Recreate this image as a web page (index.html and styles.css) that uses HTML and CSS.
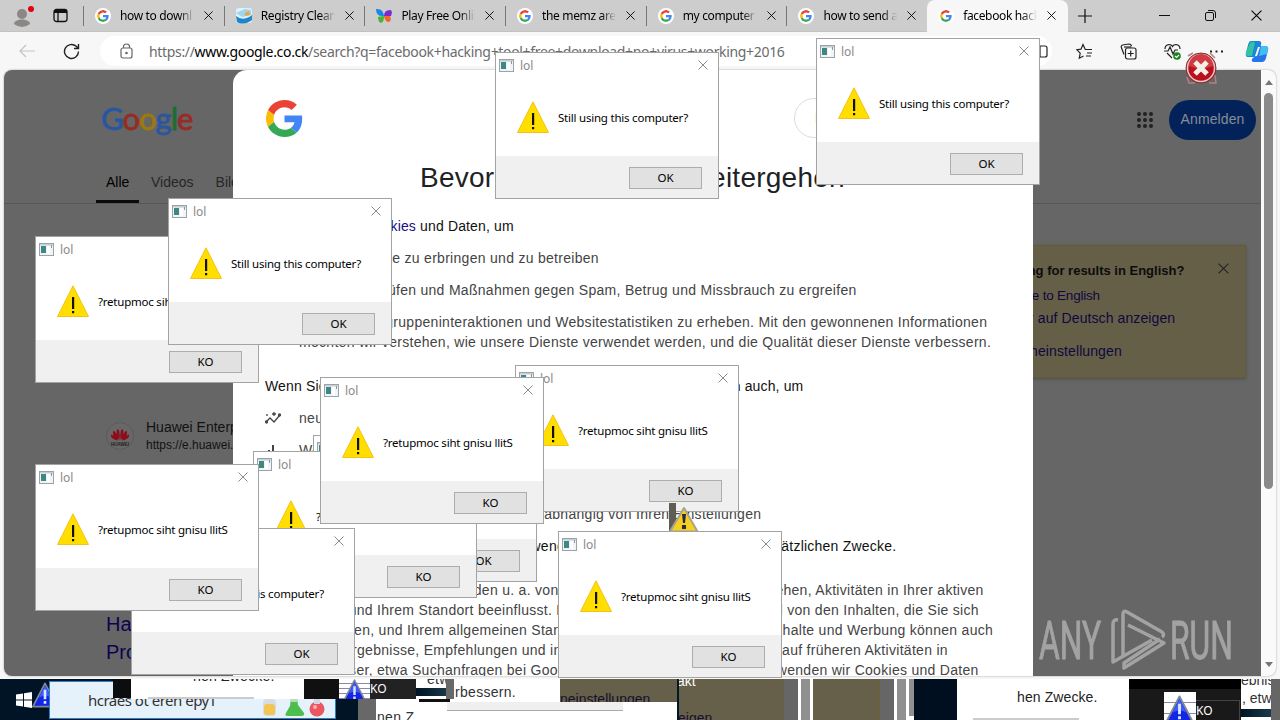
FILE: index.html
```
<!DOCTYPE html>
<html lang="de">
<head>
    <meta charset="UTF-8">
    <meta name="viewport" content="width=device-width, initial-scale=1.0">
    <title>facebook hacking tool - Google Suche</title>
    <link rel="stylesheet" href="styles.css">
</head>
<body>

<!-- shared icons -->
<svg class="sprites" width="0" height="0">
    <symbol id="google" viewBox="0 0 48 48">
        <path fill="#ea4335" d="M24 9.5c3.54 0 6.71 1.22 9.21 3.6l6.85-6.85C35.9 2.38 30.47 0 24 0 14.62 0 6.51 5.38 2.56 13.22l7.98 6.19C12.43 13.72 17.74 9.5 24 9.5z"/>
        <path fill="#4285f4" d="M46.98 24.55c0-1.57-.15-3.09-.38-4.55H24v9.02h12.94c-.58 2.96-2.26 5.48-4.78 7.18l7.73 6c4.51-4.18 7.09-10.36 7.09-17.65z"/>
        <path fill="#fbbc05" d="M10.53 28.59c-.48-1.45-.76-2.99-.76-4.59s.27-3.14.76-4.59l-7.98-6.19C.92 16.46 0 20.12 0 24c0 3.88.92 7.54 2.56 10.78l7.97-6.19z"/>
        <path fill="#34a853" d="M24 48c6.48 0 11.93-2.13 15.89-5.81l-7.73-6c-2.15 1.45-4.92 2.3-8.16 2.3-6.26 0-11.57-4.22-13.47-9.91l-7.98 6.19C6.51 42.62 14.62 48 24 48z"/>
    </symbol>
    <symbol id="x" viewBox="0 0 10 10"><path d="M.5.5l9 9M9.5.5l-9 9" fill="none" stroke="currentColor"/></symbol>
    <symbol id="app" viewBox="0 0 15 13">
        <rect x=".5" y=".5" width="14" height="12" fill="#f1f4f6" stroke="#9aa3a8"/>
        <rect x="1" y="1" width="13" height="1.5" fill="#c6cfd4"/>
        <rect x="2" y="3" width="5" height="7" fill="#3f8783"/>
        <rect x="8" y="3" width="3" height="8" fill="#fff"/>
        <path d="M12.500 2v3" stroke="#8d979c"/>
    </symbol>
    <symbol id="warn" viewBox="0 0 32 32">
        <path d="M16 .8L31.500 31.500H.5z" fill="#ffde00" stroke="#f5c21b"/>
        <path d="M15 12h2.200v12H15zM15 26h2.200v2.200H15z" fill="#111"/>
    </symbol>
    <symbol id="blue" viewBox="0 0 32 30">
        <path d="M16 1.500L30 28.500H2z" fill="#1226e8" stroke="#7f8794" stroke-width="2" stroke-linejoin="round"/>
        <path d="M16 4L9 18q7-4 14 0z" fill="#3b5cff"/>
        <path d="M14.500 9h3v11h-3zM14.500 22h3v3h-3z" fill="#dfe6ff"/>
    </symbol>
</svg>

<div class="desktop">

    <div class="browser">
        <div class="tabs">
            <div class="tabTools">
                <svg width="20" height="24" viewBox="0 0 20 24"><circle cx="8" cy="10" r="5" fill="#8b8784"/><path d="M0 20c0-6 16-6 16 0q-8 6-16 0z" fill="#8b8784"/><circle cx="17" cy="5" r="3" fill="#e3000f"/></svg>
                <svg width="15" height="15" viewBox="0 0 15 15" fill="none" stroke="#111" stroke-width="1.300"><rect x="1" y="1.500" width="13" height="12" rx="2.500"/><path d="M1 3.500h13" stroke-width="3"/><path d="M5 4v9"/></svg>
            </div>
            <div class="tab"><svg class="fav"><use href="#google"/></svg><span>how to downl</span><svg class="tabX"><use href="#x"/></svg></div>
            <div class="tab"><svg class="favPlain" viewBox="0 0 16 16"><rect width="16" height="15" rx="3" fill="#dff2fb"/><path d="M0 5L9 1l6 1v5L6 9z" fill="#9ed6f0"/><path d="M0 8q7 6 16-1v5q-8 6-15 2z" fill="#1f86c9"/><path d="M9 5l4-2 1 4-5 1z" fill="#f0a43a"/></svg><span>Registry Clean</span><svg class="tabX"><use href="#x"/></svg></div>
            <div class="tab"><svg class="favPlain" viewBox="0 0 16 16"><path d="M0 1q7-1 8 7-8 1-8-7z" fill="#1686e8"/><path d="M2 9q4-1 6-1 0 6-3 7-3-1-3-6z" fill="#46b536"/><path d="M8 8q0-6 6-6 3 0 1 6z" fill="#7a2bd0"/><path d="M8 8h6q2 4-1 6-4 0-5-6z" fill="#f0662b"/></svg><span>Play Free Onlin</span><svg class="tabX"><use href="#x"/></svg></div>
            <div class="tab"><svg class="fav"><use href="#google"/></svg><span>the memz are</span><svg class="tabX"><use href="#x"/></svg></div>
            <div class="tab"><svg class="fav"><use href="#google"/></svg><span>my computer</span><svg class="tabX"><use href="#x"/></svg></div>
            <div class="tab"><svg class="fav"><use href="#google"/></svg><span>how to send a</span><svg class="tabX"><use href="#x"/></svg></div>
            <div class="tab active"><svg class="fav"><use href="#google"/></svg><span>facebook hack</span><svg class="tabX"><use href="#x"/></svg></div>
            <svg class="newTab" width="14" height="14" viewBox="0 0 14 14" stroke="#111" stroke-width="1.200"><path d="M7 0v14M0 7h14"/></svg>
            <div class="winButtons">
                <svg width="11" height="11" viewBox="0 0 11 11" stroke="#111"><path d="M0 5.500h11"/></svg>
                <svg width="11" height="11" viewBox="0 0 11 11" fill="none" stroke="#111"><rect x=".5" y="2.500" width="8" height="8" rx="1.500"/><path d="M3 .5h5q2.500 0 2.500 2.500v5"/></svg>
                <svg width="11" height="11"><use href="#x"/></svg>
            </div>
        </div>

        <div class="toolbar">
            <svg class="back" width="17" height="14" viewBox="0 0 17 14" fill="none" stroke="#c3c3c3" stroke-width="1.200"><path d="M16 7H1M7 1L1 7l6 6"/></svg>
            <svg class="reload" width="17" height="17" viewBox="0 0 17 17" fill="none" stroke="#222" stroke-width="1.400"><path d="M15.500 8.500a7 7 0 1 1-2.300-5.200L15.500 5.500M15.500 1v4.500H11"/></svg>
            <div class="address">
                <svg width="13" height="16" viewBox="0 0 13 16" fill="none" stroke="#666" stroke-width="1.200"><rect x="1" y="5" width="11" height="10" rx="2"/><path d="M3.500 5V3.500q0-2.500 3-2.500t3 2.500V5"/><circle cx="6.500" cy="10" r=".7" fill="#666"/></svg>
                <span class="url">https://<b>www.google.co.ck</b>/search?q=facebook+hacking+tool+free+download+no+virus+working+2016</span>
            </div>
            <div class="tools">
                <svg width="17" height="17" viewBox="0 0 17 17"><rect x="1" y="3" width="14" height="11" rx="2"/><path d="M8 3v11"/></svg>
                <svg width="17" height="17" viewBox="0 0 17 17"><path d="M11 6.500H9.300L7 1.500 5 6.200.8 6.700l3.400 3.500-.9 5L7.500 13M10 6.500h6M11 10h5M10 13h5"/></svg>
                <svg width="17" height="17" viewBox="0 0 17 17"><path d="M4 11.500L1.200 4Q1 2.500 2.500 2L9 1q2 0 2.500 2"/><path d="M4 4h7.500"/><rect x="5.500" y="5" width="10.500" height="11" rx="2"/><path d="M10.700 7.500v6M7.700 10.500h6"/></svg>
                <svg width="17" height="17" viewBox="0 0 17 17"><path d="M1 6q0-4 4-4.500 2.500 0 3.500 2 1-2 3.500-2 4 .5 4 4.500M0 8h4l2-4 3 7 2-4h3M3 10l5 5"/><circle cx="13" cy="13" r="3.800" fill="#16831c" stroke="none"/><path d="M11 13l1.500 1.500L15 12" stroke="#fff"/></svg>
                <svg width="17" height="17" viewBox="0 0 17 17"><path d="M2 8.500h2M7.500 8.500h2M13 8.500h2" stroke-width="2"/></svg>
            </div>
            <svg class="copilot" width="24" height="23" viewBox="0 0 24 23">
                <path d="M6 1h8q3 0 2 4l-3 9q-1 3-4 3H3q-3 0-2-4l2-8q1-4 3-4z" fill="#1687d9"/>
                <path d="M5 3q3-2 5 0L7 16H3q-3 0-2-4z" fill="#34c2a4"/>
                <path d="M15 6h5q4 0 3 4l-2 8q-1 4-4 4H9q-3 0-2-3l2-2q3 0 4-4z" fill="#2377ea"/>
                <path d="M16 6h4q4 0 3 4l-1 4-8 2z" fill="#43bdf2"/>
                <path d="M13 7h2l-3 9h-2z" fill="#f7f7f7"/>
            </svg>
        </div>

        <div class="viewport">
            <div class="page">
                <div class="masthead">
                    <div class="wordmark"><span class="b">G</span><span class="r">o</span><span class="y">o</span><span class="b">g</span><span class="g">l</span><span class="r">e</span></div>
                    <div class="account">
                        <svg width="18" height="18" viewBox="0 0 18 18" fill="#222"><circle cx="3" cy="3" r="2"/><circle cx="9" cy="3" r="2"/><circle cx="15" cy="3" r="2"/><circle cx="3" cy="9" r="2"/><circle cx="9" cy="9" r="2"/><circle cx="15" cy="9" r="2"/><circle cx="3" cy="15" r="2"/><circle cx="9" cy="15" r="2"/><circle cx="15" cy="15" r="2"/></svg>
                        <span class="login">Anmelden</span>
                    </div>
                </div>
                <div class="nav"><span class="current">Alle</span><span>Videos</span><span>Bilder</span></div>
                <div class="columns">
                    <div class="results">
                        <div class="site">
                            <svg width="28" height="28" viewBox="0 0 28 28"><circle cx="14" cy="14" r="13.500" fill="#686868" stroke="#5b5b5b"/><g fill="#8e0d1a"><path d="M13.500 18q-5-7-2-11 3 1 2 11zM14.500 18q5-7 2-11-3 1-2 11zM12.500 18Q5 14 7.500 8.500 11 11 12.500 18zM15.500 18q7.500-4 5-9.500-3.500 2.500-5 9.500zM12 18.500q-7-1-7.500-6 5 1 7.500 6zM16 18.500q7-1 7.500-6-5 1-7.500 6z"/></g><text x="14" y="24" text-anchor="middle" class="tiny">HUAWEI</text></svg>
                            <div><p>Huawei Enterprise</p><p class="small">https://e.huawei.com</p></div>
                        </div>
                        <h3>Ha<br>Pro</h3>
                    </div>
                    <div class="langCard">
                        <p class="question">Looking for results in English?</p>
                        <svg width="11" height="11"><use href="#x"/></svg>
                        <p class="first">Change to English</p>
                        <p class="second">Weiter auf Deutsch anzeigen</p>
                        <p class="third">Spracheinstellungen</p>
                    </div>
                </div>
                <div class="anyrun">
                    <span>ANY</span>
                    <svg width="58" height="64" viewBox="0 0 58 64" fill="none" stroke="#a3a3a3" stroke-width="3.500" stroke-linejoin="round"><path d="M9 11q-5-1-5 4v38l7-4 32-18"/><path d="M14 47V5q0-4 4-2l35 20q3 3 0 5"/><path d="M19 16l36 18-40 25v-5l36-24"/></svg>
                    <span>RUN</span>
                </div>
            </div>
            <div class="scrollbar">
                <svg width="8" height="5" viewBox="0 0 8 5"><path d="M0 5l4-5 4 5z" fill="#777"/></svg>
                <div class="thumb"></div>
                <svg width="8" height="5" viewBox="0 0 8 5"><path d="M0 0l4 5 4-5z" fill="#777"/></svg>
            </div>

            <div class="consent">
                <div class="consentTop"><svg width="37" height="37"><use href="#google"/></svg><span class="langPick">DE</span></div>
                <h1>Bevor Sie zu Google weitergehen</h1>
                <p class="lead">Wir verwenden <a>Cookies</a> und Daten, um</p>
                <p class="item">Google-Dienste zu erbringen und zu betreiben</p>
                <p class="item">Ausfälle zu prüfen und Maßnahmen gegen Spam, Betrug und Missbrauch zu ergreifen</p>
                <p class="item">Daten zu Zielgruppeninteraktionen und Websitestatistiken zu erheben. Mit den gewonnenen Informationen</p>
                <p class="item more">möchten wir verstehen, wie unsere Dienste verwendet werden, und die Qualität dieser Dienste verbessern.</p>
                <p class="lead l2">Wenn Sie „Alle akzeptieren“ auswählen, verwenden wir Cookies und Daten auch, um</p>
                <p class="item"><svg width="16" height="12" viewBox="0 0 16 12" fill="none" stroke="#444" stroke-width="1.300"><path d="M1 10l4-4 4 4 6-7"/><circle cx="1.500" cy="10" r="1"/><circle cx="14.500" cy="3" r="1"/><path d="M9 0v4M7 2h4M2 2v2"/></svg>neue Dienste zu entwickeln und zu verbessern</p>
                <p class="item"><svg width="16" height="12" viewBox="0 0 16 12" fill="#444"><path d="M3 6h2v6H3zM7 1h2v11H7zM11 8h2v4h-2z"/></svg>Werbung auszuliefern und ihre Wirkung zu messen</p>
                <p class="item tight">personalisierte Inhalte anzuzeigen, abhängig von Ihren Einstellungen</p>
                <p class="item">personalisierte Werbung anzuzeigen, abhängig von Ihren Einstellungen</p>
                <p class="lead l3">Wenn Sie „Alle ablehnen“ auswählen, verwenden wir Cookies nicht für diese zusätzlichen Zwecke.</p>
                <div class="fine">
                    <p>Nicht personalisierte Inhalte werden u. a. von Inhalten, die Sie sich gerade ansehen, Aktivitäten in Ihrer aktiven</p>
                    <p>Suchsitzung und Ihrem Standort beeinflusst. Nicht personalisierte Werbung wird von den Inhalten, die Sie sich</p>
                    <p>gerade ansehen, und Ihrem allgemeinen Standort beeinflusst. Personalisierte Inhalte und Werbung können auch</p>
                    <p>relevantere Ergebnisse, Empfehlungen und individuelle Werbung enthalten, die auf früheren Aktivitäten in</p>
                    <p>diesem Browser, etwa Suchanfragen bei Google, basieren. Gegebenenfalls verwenden wir Cookies und Daten</p>
                </div>
            </div>
        </div>
    </div>

    <!-- torn taskbar: every shard is a loose piece of the screen -->
    <div class="taskbar">
        <svg class="start" width="16" height="16" viewBox="0 0 16 16" fill="#fff"><path d="M0 2.500L7 1.500V7.500H0zM8 1.300L16 0v7.500H8zM0 8.500h7v6l-7-1zM8 8.500h8V16l-8-1.300z"/></svg>
        <svg class="tri t1"><use href="#blue"/></svg>
        <div class="search"><span>hcraes ot ereh epyT</span>
            <svg width="68" height="20" viewBox="0 0 68 20"><rect x="3" y="2" width="13" height="17" rx="4" fill="#d8dde0"/><rect x="4" y="7" width="11" height="11" rx="3" fill="#f3c552"/><path d="M31 1h6l1 7 6 8q1 3-3 3H28q-4 0-2-3l4-7z" fill="#4cbe4e"/><path d="M31 1h6v4h-6z" fill="#bcd9be"/><circle cx="57" cy="12" r="7.500" fill="#ec5661"/><path d="M54 1h6v6h-6z" fill="#d5d5dd"/><circle cx="55" cy="10" r="2" fill="#f9aeb2"/></svg>
        </div>
        <div class="shard s1"></div>
        <div class="shard s2"><span>hen Zwecke.</span></div>
        <div class="shard s3"></div>
        <div class="shard s4"></div>
        <div class="shard s5"><svg class="tri"><use href="#blue"/></svg></div>
        <div class="shard s6">KO</div>
        <div class="shard s7"></div>
        <div class="shard s8"></div>
        <div class="shard s9"></div>
        <div class="shard word w1">nen Z</div>
        <div class="shard word w2">etw</div>
        <div class="shard s10"></div>
        <div class="shard word w3">rbessern.</div>
        <div class="shard s11"></div>
        <div class="shard olive o1"><span>neinstellungen</span></div>
        <div class="shard s12"></div>
        <div class="shard olive o2"><i>akt</i><span>zeigen</span></div>
        <div class="shard bars"><div></div><div></div><div></div></div>
        <div class="shard olive o3"></div>
        <div class="shard bars late"><div></div><div></div><div></div></div>
        <div class="shard s13"></div>
        <div class="shard s14"><span>hen Zwecke.</span><div></div></div>
        <div class="shard s15"><div class="patch"><svg class="tri"><use href="#blue"/></svg></div><div class="ko">KO</div></div>
        <div class="shard s16"><span>ebnis</span><b>, etwa</b><div></div></div>
        <div class="shard s17"></div>
    </div>

    <!-- message boxes, back to front -->
    <div class="box g"><div class="title"><svg class="app"><use href="#app"/></svg>lol<svg class="close"><use href="#x"/></svg></div><div class="msg"><svg><use href="#warn"/></svg><span>Still using this computer?</span></div><div class="foot"><div class="btn">OK</div></div></div>
    <div class="box h"><div class="title"><svg class="app"><use href="#app"/></svg>lol<svg class="close"><use href="#x"/></svg></div><div class="msg"><svg><use href="#warn"/></svg><span>?retupmoc siht gnisu llitS</span></div><div class="foot"><div class="btn">KO</div></div></div>
    <div class="box e"><div class="title"><svg class="app"><use href="#app"/></svg>lol<svg class="close"><use href="#x"/></svg></div><div class="msg"><svg><use href="#warn"/></svg><span>?retupmoc siht gnisu llitS</span></div><div class="foot"><div class="btn">KO</div></div></div>
    <div class="box f"><div class="title"><svg class="app"><use href="#app"/></svg>lol<svg class="close"><use href="#x"/></svg></div><div class="msg"><svg><use href="#warn"/></svg><span>?retupmoc siht gnisu llitS</span></div><div class="foot"><div class="btn">KO</div></div></div>
    <div class="box j"><div class="title"><svg class="app"><use href="#app"/></svg>lol<svg class="close"><use href="#x"/></svg></div><div class="msg"><svg><use href="#warn"/></svg><span>Still using this computer?</span></div><div class="foot"><div class="btn">OK</div></div></div>
    <div class="box i"><div class="title"><svg class="app"><use href="#app"/></svg>lol<svg class="close"><use href="#x"/></svg></div><div class="msg"><svg><use href="#warn"/></svg><span>?retupmoc siht gnisu llitS</span></div><div class="foot"><div class="btn">KO</div></div></div>
    <div class="box d"><div class="title"><svg class="app"><use href="#app"/></svg>lol<svg class="close"><use href="#x"/></svg></div><div class="msg"><svg><use href="#warn"/></svg><span>?retupmoc siht gnisu llitS</span></div><div class="foot"><div class="btn">KO</div></div></div>
    <div class="box c"><div class="title"><svg class="app"><use href="#app"/></svg>lol<svg class="close"><use href="#x"/></svg></div><div class="msg"><svg><use href="#warn"/></svg><span>Still using this computer?</span></div><div class="foot"><div class="btn">OK</div></div></div>
    <div class="box a"><div class="title"><svg class="app"><use href="#app"/></svg>lol<svg class="close"><use href="#x"/></svg></div><div class="msg"><svg><use href="#warn"/></svg><span>Still using this computer?</span></div><div class="foot"><div class="btn">OK</div></div></div>
    <div class="box b"><div class="title"><svg class="app"><use href="#app"/></svg>lol<svg class="close"><use href="#x"/></svg></div><div class="msg"><svg><use href="#warn"/></svg><span>Still using this computer?</span></div><div class="foot"><div class="btn">OK</div></div></div>

    <div class="smear"></div>
    <svg class="stamp" width="32" height="30" viewBox="0 0 32 30"><path d="M16 3L29.500 26.500H2z" fill="#f5cf22" stroke="#a9a28c" stroke-width="2" stroke-linejoin="round"/><path d="M14 9h4l-1 9h-2zM14 20h4v4h-4z" fill="#2b2a3c"/></svg>
    <div class="box k"><div class="title"><svg class="app"><use href="#app"/></svg>lol<svg class="close"><use href="#x"/></svg></div><div class="msg"><svg><use href="#warn"/></svg><span>?retupmoc siht gnisu llitS</span></div><div class="foot"><div class="btn">KO</div></div></div>

    <svg class="error" width="34" height="34" viewBox="0 0 34 34">
        <path d="M4 5l5-3M26 2l5 5M3 26l2 6h6M25 32h7l-1-8" fill="none" stroke="#b77f7f" stroke-width="1.500"/>
        <circle cx="17" cy="17" r="15" fill="#b9101b" stroke="#7d3434"/><circle cx="17" cy="17" r="13.500" fill="none" stroke="#e9c9c9" stroke-width="1.500"/>
        <path d="M5 15a12 12 0 0 1 24 0q-12 5-24 0z" fill="#d03a43"/>
        <path d="M11 11l12 12M23 11L11 23" stroke="#f2efe8" stroke-width="5"/>
    </svg>
</div>

</body>
</html>
```

FILE: styles.css
```
* {
    box-sizing: border-box;
}
body {
    margin: 0;
    font-family: "Liberation Sans", Arial, sans-serif;
    overflow: hidden;
}
p, h1, h3 {
    margin: 0;
    font-weight: normal;
}
.sprites {
    position: absolute;
}
.desktop {
    position: relative;
    width: 1280px;
    height: 720px;
    overflow: hidden;
    background: #f7f7f7;
}
.browser {
    display: flex;
    flex-direction: column;
    height: 679px;
    background: #f7f7f7;
}

/* tab strip */
.tabs {
    display: flex;
    align-items: center;
    height: 32px;
    background: #cdcdcd;
    border-bottom: 1px solid #c2c2c2;
    font: 12px "Noto Sans", sans-serif;
    flex: none;
}
.tabTools {
    display: flex;
    align-items: center;
    gap: 19px;
    width: 83px;
    padding-left: 14px;
    flex: none;
}
.tab {
    display: flex;
    align-items: center;
    width: 140.7px;
    height: 20px;
    padding-left: 11px;
    border-left: 1px solid #777;
    flex: none;
}
.tab span {
    width: 74px;
    margin-left: 9px;
    white-space: nowrap;
    overflow: hidden;
    letter-spacing: -0.35px;
    -webkit-mask-image: linear-gradient(90deg, #000 80%, transparent);
}
.tab.active {
    height: 32px;
    background: #f7f7f7;
    border-left: 0;
    border-radius: 8px 8px 0 0;
}
.fav {
    width: 16px;
    height: 16px;
    padding: 2px;
    border-radius: 50%;
    background: #fff;
    flex: none;
}
.favPlain {
    width: 16px;
    height: 16px;
    flex: none;
}
.tabX {
    width: 9px;
    height: 9px;
    margin-left: 10px;
    flex: none;
}
.newTab {
    margin-left: 10px;
}
.winButtons {
    display: flex;
    gap: 35px;
    margin-left: auto;
    margin-right: 18px;
}

/* toolbar */
.toolbar {
    display: flex;
    align-items: center;
    height: 38px;
    flex: none;
}
.back {
    margin-left: 19px;
}
.reload {
    margin-left: 27px;
}
.address {
    display: flex;
    align-items: center;
    gap: 16px;
    width: 952px;
    height: 30px;
    margin-left: 20px;
    padding-left: 20px;
    border-radius: 15px;
    background: #fff;
}
.url {
    font: 14px "Noto Sans", sans-serif;
    color: #6b6b6b;
    white-space: nowrap;
    letter-spacing: -0.33px;
}
.url b {
    font-weight: normal;
    color: #000;
}
.tools {
    display: flex;
    gap: 27px;
    margin-left: -20px;
    fill: none;
    stroke: #222;
    stroke-width: 1.2;
}
.copilot {
    margin-left: 20px;
}

/* page behind the consent layer */
.viewport {
    position: relative;
    display: flex;
    width: 1272px;
    height: 606px;
    margin-left: 4px;
    border-radius: 8px;
    background: #fafafa;
    box-shadow: 0 0 2px #999;
    overflow: hidden;
}
.page {
    width: 1257px;
    background: #666;
    flex: none;
}
.masthead {
    display: flex;
    align-items: center;
    justify-content: space-between;
    height: 99px;
    padding: 0 5px 0 97px;
}
.wordmark {
    padding-bottom: 3px;
    font: 31px Lato, sans-serif;
    letter-spacing: -1px;
    -webkit-text-stroke: 0.8px;
}
.wordmark .b { color: #2a56a0; }
.wordmark .r { color: #962c26; }
.wordmark .y { color: #9b7a0c; }
.wordmark .g { color: #1e6d36; }
.account {
    display: flex;
    align-items: center;
    gap: 15px;
}
.login {
    width: 87px;
    height: 40px;
    border-radius: 20px;
    background: #04225a;
    color: #868d99;
    font-size: 14px;
    line-height: 39px;
    text-align: center;
    letter-spacing: 0.1px;
}
.nav {
    display: flex;
    gap: 2px;
    height: 35px;
    padding-left: 92px;
    border-bottom: 1px solid #575757;
    font-size: 14px;
    color: #272727;
    line-height: 27px;
}
.nav span {
    padding: 0 10px;
}
.nav .current {
    width: 43px;
    height: 34px;
    color: #000;
    border-bottom: 3px solid #0b0b0b;
}
.columns {
    display: flex;
    justify-content: space-between;
    padding-right: 15px;
}
.results {
    padding: 214px 0 0 102px;
}
.site {
    display: flex;
    align-items: center;
    gap: 12px;
    font-size: 14px;
    line-height: 18px;
    color: #121212;
}
.site .small {
    font-size: 12px;
}
.tiny {
    font-size: 4.5px;
    font-weight: bold;
    fill: #222;
}
.results h3 {
    margin-top: 156px;
    font-size: 20px;
    line-height: 28px;
    color: #0a0450;
}
.langCard {
    position: relative;
    width: 340px;
    height: 133px;
    margin-top: 41px;
    padding: 16px 0 0 86px;
    background: #665f48;
    border: 1px solid #625c3d;
    box-shadow: 0 1px 3px #4e4e45;
    font-size: 14px;
    line-height: 18px;
    letter-spacing: 0.1px;
    color: #0f0840;
    white-space: nowrap;
}
.langCard .question {
    font-size: 13px;
    font-weight: bold;
    letter-spacing: 0;
    color: #0c0c0c;
    margin-bottom: 7px;
}
.langCard .first {
    font-size: 13.5px;
    letter-spacing: -0.2px;
}
.langCard .second {
    margin-top: 4px;
}
.langCard .third {
    margin-top: 15px;
}
.langCard svg {
    position: absolute;
    top: 17px;
    right: 16px;
    color: #222;
}
.anyrun {
    position: absolute;
    left: 1035px;
    top: 539px;
    display: flex;
    align-items: center;
    color: #a3a3a3;
    font: 53px Roboto, sans-serif;
}
.anyrun span {
    width: 63px;
    transform: scaleX(0.6);
    transform-origin: 0 50%;
    -webkit-text-stroke: 1px;
}
.anyrun svg {
    margin: 0 3px 0 7px;
    flex: none;
}
.scrollbar {
    display: flex;
    flex-direction: column;
    align-items: center;
    justify-content: space-between;
    width: 15px;
    padding: 10px 0 9px;
}
.thumb {
    width: 9px;
    height: 396px;
    margin-bottom: 166px;
    border-radius: 5px;
    background: #8a8a8a;
}

/* consent layer */
.consent {
    position: absolute;
    left: 229px;
    top: 0;
    width: 800px;
    height: 606px;
    padding: 0 32px;
    border-radius: 14px 0 0 0;
    background: #fff;
    color: #444;
    font-size: 14px;
    line-height: 20px;
    letter-spacing: 0.29px;
    white-space: nowrap;
}
.consentTop {
    display: flex;
    align-items: center;
    justify-content: space-between;
    height: 80px;
    padding: 16px 0 0 1px;
}
.langPick {
    width: 207px;
    height: 40px;
    padding: 9px 20px;
    border: 1px solid #dadce0;
    border-radius: 20px;
}
.consent h1 {
    margin: 8px 0 18px 155px;
    font: 28px/40px "Liberation Sans", Arial, sans-serif;
    letter-spacing: 0.25px;
    color: #202124;
}
.lead {
    color: #111;
    letter-spacing: 0.15px;
}
.lead a {
    color: #1a0d80;
}
.item {
    padding-left: 34px;
    margin-top: 12px;
}
.item svg {
    margin: 0 18px 0 -34px;
    vertical-align: -1px;
}
.more {
    margin-top: 0;
}
.tight {
    letter-spacing: 0.1px;
}
.l2 {
    margin-top: 24px;
}
.l3 {
    margin-top: 12px;
    letter-spacing: 0.23px;
}
.fine {
    margin-top: 24px;
}

/* taskbar shards */
.taskbar {
    position: absolute;
    left: 0;
    top: 679px;
    width: 1280px;
    height: 41px;
    background: linear-gradient(90deg, #001426 0 372px, #fff 372px);
    overflow: hidden;
    font-size: 14px;
}
.start {
    position: absolute;
    left: 16px;
    top: 13px;
}
.tri {
    position: absolute;
    left: 0;
    top: 0;
    width: 30px;
    height: 26px;
}
.t1 {
    left: 30px;
    top: 3px;
}
.search {
    position: absolute;
    left: 49px;
    top: 2px;
    width: 287px;
    height: 38px;
    border: 1px solid #2b7fc4;
    background: #e6f2fb;
    color: #333;
    font: 15px "Noto Sans", sans-serif;
}
.search span {
    position: absolute;
    left: 38px;
    top: 8px;
    white-space: nowrap;
    letter-spacing: -0.5px;
}
.search svg {
    position: absolute;
    left: 210px;
    top: 15px;
}
.shard {
    position: absolute;
    overflow: hidden;
    top: 0;
    white-space: nowrap;
}
.s1 { left: 113px; width: 19px; height: 19px; background: #0c0d0f; }
.s2 { left: 131px; width: 173px; height: 20px; background: #fff; }
.s2 span { position: absolute; left: 62px; top: -11px; letter-spacing: 0.2px; color: #222; }
.s3 { left: 148px; top: 18px; width: 106px; height: 2px; background: #ccc; }
.s4 { left: 304px; width: 35px; height: 20px; background: #101010; }
.s5 { left: 339px; width: 32px; height: 20px; background: repeating-linear-gradient(#fff 0 4px, #88a 4px 5px); }
.s5 .tri { width: 31px; height: 24px; }
.s6 { left: 370px; width: 46px; height: 20px; background: #222; color: #fff; font: 12px/20px "Noto Sans", sans-serif; }
.s7 { left: 416px; top: 9px; width: 34px; height: 8px; background: linear-gradient(90deg, #001322, #193b4b); }
.s8 { left: 419px; top: 20px; width: 31px; height: 3px; background: #111; }
.s9 { left: 358px; top: 20px; width: 18px; height: 21px; background: #686868; }
.s10 { left: 446px; width: 8px; height: 20px; background: #686868; }
.s11 { left: 447px; top: 23px; width: 176px; height: 9px; background: #efefef; border-bottom: 1px solid #aaa; }
.s12 { left: 677px; width: 2px; height: 41px; background: #00182a; }
.word { color: #333; letter-spacing: 0.3px; line-height: 20px; }
.w1 { left: 377px; top: 28px; }
.w2 { left: 427px; top: -10px; }
.w3 { left: 455px; top: 3px; }
.olive { background: #665f4a; color: #17102f; height: 41px; }
.olive span { position: absolute; }
.o1 { left: 560px; width: 117px; height: 23px; }
.o1 span { left: 0; top: 12px; }
.o2 { left: 679px; width: 105px; }
.o2 i { position: absolute; left: -2px; top: -6px; font-style: normal; color: #fff; }
.o2 span { left: -8px; top: 31px; }
.o3 { left: 813px; width: 67px; border-right: 1px solid #6d6230; }
.bars { display: flex; gap: 3px; left: 784px; height: 41px; background: #fff; }
.bars div { width: 14px; background: #666; }
.bars div + div { width: 9px; background: #909090; }
.bars div:last-child { width: 0; }
.late { left: 880px; }
.bars.late div:last-child { width: 5px; height: 37px; }
.s13 { left: 914px; width: 43px; height: 41px; background: #000f1f; }
.s14 { left: 957px; width: 172px; height: 41px; background: #fff; color: #222; letter-spacing: 0.1px; }
.s14 span { position: absolute; left: 60px; top: 10px; }
.s14 div { position: absolute; left: 16px; top: 39px; width: 106px; height: 2px; background: #ccc; }
.s15 { left: 1129px; width: 112px; height: 41px; background: #191919; border-top: 10px solid #000; }
.patch { position: absolute; left: 35px; top: 3px; width: 32px; height: 28px; background: repeating-linear-gradient(#fff 0 10px, #88a 10px 11px); }
.patch .tri { top: 3px; width: 31px; height: 29px; }
.ko { position: absolute; left: 67px; top: 11px; width: 44px; height: 22px; border: 1px solid #444; border-left: 0; color: #fff; font: 12px/19px "Noto Sans", sans-serif; }
.s16 { left: 1241px; width: 31px; height: 41px; background: #fff; color: #333; }
.s16 span { position: absolute; left: 0; top: -7px; }
.s16 b { position: absolute; left: 1px; top: 11px; font-weight: normal; }
.s16 div { position: absolute; left: 0; top: 30px; width: 30px; height: 8px; background: linear-gradient(90deg, #001322, #193b4b); }
.s17 { left: 1271px; width: 9px; height: 41px; background: #666; }

/* message boxes */
.box {
    position: absolute;
    width: 224px;
    height: 147px;
    border: 1px solid #a3a3a3;
    background: #fff;
    font: 11.5px "Noto Sans", sans-serif;
    color: #000;
    display: flex;
    flex-direction: column;
}
.title {
    display: flex;
    align-items: center;
    height: 24px;
    padding: 0 10px 0 3px;
    font-size: 12px;
    color: #8a8a8a;
}
.app {
    width: 15px;
    height: 13px;
    margin-right: 6px;
}
.close {
    width: 10px;
    height: 10px;
    margin-left: auto;
}
.msg {
    display: flex;
    align-items: center;
    gap: 9px;
    height: 79px;
    padding: 1px 0 0 21px;
    white-space: nowrap;
}
.msg svg {
    width: 32px;
    height: 32px;
}
.msg span {
    letter-spacing: -0.22px;
}
.foot {
    flex: 1;
    padding: 11px 16px 0;
    background: #f0f0f0;
}
.btn {
    width: 73px;
    height: 22px;
    margin-left: auto;
    border: 1px solid #adadad;
    background: #e1e1e1;
    line-height: 20px;
    text-align: center;
}
.a { left: 495px; top: 52px; }
.b { left: 816px; top: 38px; }
.c { left: 168px; top: 198px; }
.d { left: 35px; top: 236px; }
.e { left: 515px; top: 365px; }
.f { left: 320px; top: 377px; }
.g { left: 313px; top: 435px; }
.h { left: 253px; top: 451px; }
.i { left: 35px; top: 464px; }
.j { left: 131px; top: 528px; }
.k { left: 558px; top: 531px; }
.smear {
    position: absolute;
    left: 669px;
    top: 503px;
    width: 7px;
    height: 32px;
    background: #5e5c55;
}
.stamp {
    position: absolute;
    left: 668px;
    top: 505px;
}
.error {
    position: absolute;
    left: 1184px;
    top: 51px;
}
```
